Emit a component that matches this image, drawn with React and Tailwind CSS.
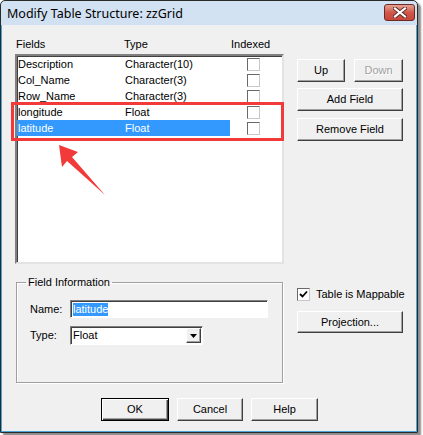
import React from "react";

const font = { fontFamily: '"Liberation Sans", Arial, sans-serif' };

const Btn = ({ children, className = "", disabled }) => (
  <div
    className={`flex items-center justify-center whitespace-nowrap font-normal bg-[#f0f0f0] border border-t-white border-l-white border-r-[#404040] border-b-[#404040] shadow-[inset_-1px_-1px_0_#a0a0a0] text-[11px] leading-none ${
      disabled ? "text-[#a0a0a0] [text-shadow:1px_1px_0_#fff]" : "text-black"
    } ${className}`}
  >
    {children}
  </div>
);

const Box = ({ checked }) => (
  <div className="w-[13px] h-[13px] shrink-0 bg-white border border-t-[#696969] border-l-[#696969] border-r-[#c8c8c8] border-b-[#c8c8c8] flex items-center justify-center">
    {checked && (
      <svg width="9" height="9" viewBox="0 0 9 9">
        <path d="M1 4 L3.5 6.5 L8 1.5" stroke="#000" strokeWidth="1.8" fill="none" />
      </svg>
    )}
  </div>
);

const rows = [
  ["Description", "Character(10)"],
  ["Col_Name", "Character(3)"],
  ["Row_Name", "Character(3)"],
  ["longitude", "Float"],
  ["latitude", "Float", true],
];

const App = () => {
  return (
    <div className="w-[423px] h-[435px] bg-white" style={font}>
      <div className="relative w-[418px] h-[433px] flex flex-col border border-[#2a2a2a] rounded-t-[5px] bg-gradient-to-b from-[#d3e2f2] to-[#b9d1ea] shadow-[3px_3px_2px_rgba(0,0,0,0.45)]">
        {/* Title bar */}
        <div className="h-[24px] flex items-center justify-between pl-[6px] pr-[2px]">
          <span className="text-[12.5px] text-black mt-[2px]" style={{ fontFamily: '"Noto Sans", "Liberation Sans", sans-serif' }}>
            Modify Table Structure: zzGrid
          </span>
          <div className="w-[31px] h-[17px] mt-[-2px] rounded-[3px] border border-[#6b2a22] bg-gradient-to-b from-[#e5a396] via-[#d0574a] to-[#c8463a] flex items-center justify-center">
            <svg width="14" height="11" viewBox="0 0 14 11">
              <path d="M2 1.5 L12 9.5 M12 1.5 L2 9.5" stroke="#5a2a25" strokeWidth="4" strokeLinecap="square" />
              <path d="M2 1.5 L12 9.5 M12 1.5 L2 9.5" stroke="#fff" strokeWidth="2.2" strokeLinecap="square" />
            </svg>
          </div>
        </div>

        {/* Client area */}
        <div className="flex-1 flex flex-col bg-[#f0f0f0] border-l border-r border-b border-[#4da3d6] pl-[13px] pt-[12px] text-[11px] text-black">
          <div className="flex">
            {/* Left column */}
            <div className="w-[269px] flex flex-col">
              <div className="h-[14px] leading-[14px] flex">
                <span className="w-[109px] pl-[1px]">Fields</span>
                <span className="w-[107px]">Type</span>
                <span>Indexed</span>
              </div>
              <div className="mt-[3px] h-[210px] bg-white border-2 border-t-[#808080] border-l-[#808080] border-r-[#e3e3e3] border-b-[#e3e3e3] shadow-[inset_1px_1px_0_#404040]">
                {rows.map(([name, type, sel]) => (
                  <div key={name} className="h-[16px] flex items-center">
                    <div className={`w-[213px] h-[16px] flex items-center ${sel ? "bg-[#3399ff] text-white" : ""}`}>
                      <span className="w-[108px] pl-[1px]">{name}</span>
                      <span>{type}</span>
                    </div>
                    <div className="ml-[17px]">
                      <Box />
                    </div>
                  </div>
                ))}
              </div>

              <fieldset className="mt-[11px] ml-[1px] w-[267px] h-[108px] border border-[#a0a0a0] shadow-[1px_1px_0_#fff,inset_1px_1px_0_#fff] px-[13px]">
                <legend className="ml-[-4px] px-[2px] leading-[14px]">Field Information</legend>
                <div className="mt-[11px] flex items-center">
                  <span className="w-[40px]">Name:</span>
                  <div className="w-[198px] h-[18px] bg-white border border-t-[#808080] border-l-[#808080] border-r-white border-b-white shadow-[inset_1px_1px_0_#404040] flex items-center pl-[2px]">
                    <span className="bg-[#3399ff] text-white leading-[13px]">latitude</span>
                  </div>
                </div>
                <div className="mt-[8px] flex items-center">
                  <span className="w-[40px]">Type:</span>
                  <div className="w-[133px] h-[19px] bg-white border border-t-[#808080] border-l-[#808080] border-r-white border-b-white shadow-[inset_1px_1px_0_#404040] flex items-center justify-between pl-[2px] pr-[1px]">
                    <span>Float</span>
                    <div className="w-[15px] h-[15px] bg-[#f0f0f0] border border-t-white border-l-white border-r-[#404040] border-b-[#404040] shadow-[inset_-1px_-1px_0_#a0a0a0] flex items-center justify-center">
                      <svg width="7" height="4" viewBox="0 0 7 4">
                        <path d="M0 0 H7 L3.5 4 Z" fill="#000" />
                      </svg>
                    </div>
                  </div>
                </div>
              </fieldset>
            </div>

            {/* Right column */}
            <div className="ml-[13px] w-[106px] flex flex-col">
              <div className="mt-[22px] flex gap-[9px]">
                <Btn className="w-[48px] h-[23px]">Up</Btn>
                <Btn className="w-[49px] h-[23px]" disabled>
                  Down
                </Btn>
              </div>
              <Btn className="mt-[6px] h-[23px]">Add Field</Btn>
              <Btn className="mt-[7px] h-[23px]">Remove Field</Btn>
              <div className="mt-[146px] h-[14px] flex items-center gap-[6px] whitespace-nowrap">
                <Box checked />
                <span>Table is Mappable</span>
              </div>
              <Btn className="mt-[10px] h-[22px]">Projection...</Btn>
            </div>
          </div>

          {/* Bottom buttons */}
          <div className="mt-[15px] ml-[86px] flex gap-[8px]">
            <div className="w-[68px] h-[23px] flex items-center justify-center bg-[#f0f0f0] border border-black shadow-[inset_1px_1px_0_#fff,inset_-1px_-1px_0_#404040,inset_-2px_-2px_0_#a0a0a0]">
              OK
            </div>
            <Btn className="w-[66px] h-[23px]">Cancel</Btn>
            <Btn className="w-[67px] h-[23px]">Help</Btn>
          </div>
        </div>

        {/* Annotation overlays */}
        <div className="absolute left-[10px] top-[101px] w-[273px] h-[39px] border-[3px] border-[#f23a3a] pointer-events-none" />
        <svg className="absolute left-[-1px] top-[-1px] pointer-events-none" width="423" height="435">
          <polygon points="59,145 78,152 72,157 105,195 67,161 62,167" fill="#f23a3a" />
        </svg>
      </div>
    </div>
  );
};

export default App;
